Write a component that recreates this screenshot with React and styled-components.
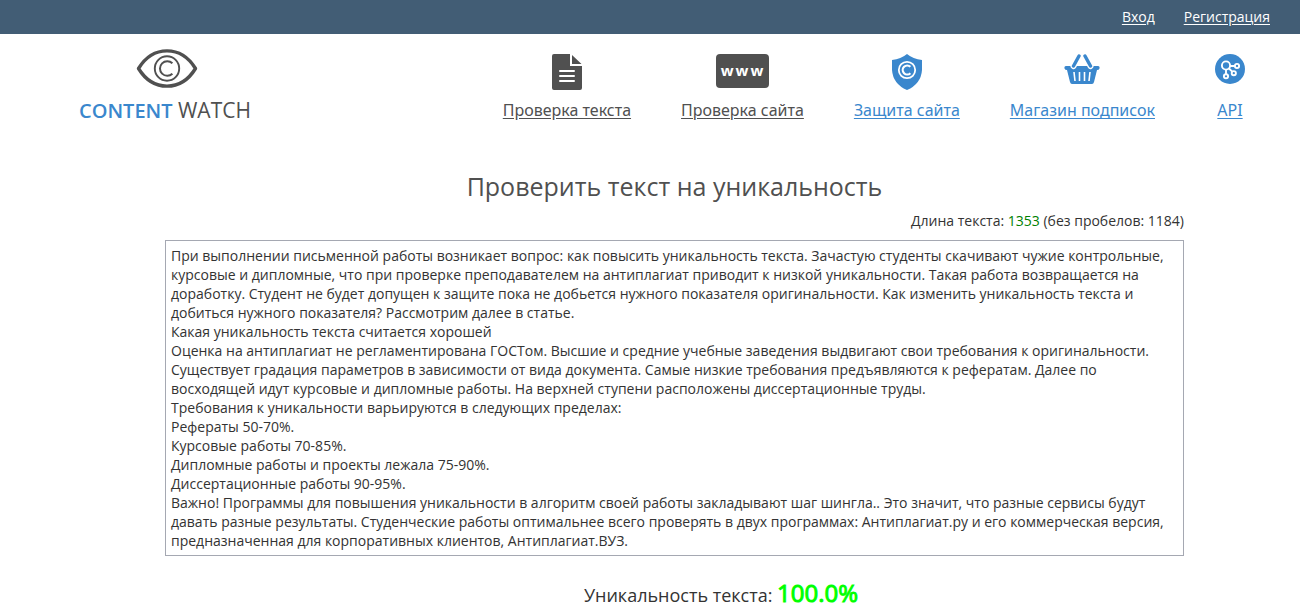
import React from "react";
import styled, { createGlobalStyle } from "styled-components";

const GlobalStyle = createGlobalStyle`
  * { box-sizing: border-box; }
  body {
    margin: 0;
    background: #fff;
    color: #333;
    font-family: "Open Sans", "Noto Sans", sans-serif;
    font-size: 14px;
    line-height: 20px;
  }
`;

const TopBar = styled.div`
  display: flex;
  justify-content: flex-end;
  align-items: center;
  gap: 29px;
  height: 34px;
  padding: 0 30px;
  background: #425d75;
`;

const TopLink = styled.a`
  color: #fff;
  text-underline-offset: 2px;
`;

const Header = styled.header`
  display: flex;
  justify-content: space-between;
  align-items: flex-start;
  padding: 15px 45px 0 79px;
`;

const Logo = styled.a`
  display: flex;
  flex-direction: column;
  align-items: center;
  gap: 9px;
  color: #505050;
  font-size: 21px;
  line-height: 24px;
  text-decoration: none;
  white-space: nowrap;
  svg { display: block; margin-left: 5px; }
`;

const Brand = styled.span`
  color: #3a87cd;
  font-size: 20px;
  font-weight: 600;
`;

const Nav = styled.nav`
  display: flex;
  gap: 50px;
  padding-top: 5px;
`;

const NavLink = styled.a`
  display: flex;
  flex-direction: column;
  align-items: center;
  gap: 8px;
  min-width: 50px;
  color: ${({ $accent }) => ($accent ? "#3a87cd" : "#505050")};
  font-family: "Noto Sans", "Open Sans", sans-serif;
  font-size: 16px;
  line-height: 24px;
  white-space: nowrap;
  text-underline-offset: 2px;
  svg { display: block; height: 36px; }
`;

const Main = styled.main`
  padding: 46px 116px 0 165px;
`;

const Title = styled.h1`
  margin: 0;
  color: #505050;
  font-size: 25px;
  font-weight: 400;
  line-height: 34px;
  text-align: center;
`;

const Counter = styled.label`
  display: block;
  margin: 8px 0 9px;
  text-align: right;
`;

const Count = styled.span`
  color: #008000;
`;

const TextInput = styled.textarea`
  display: block;
  width: 100%;
  padding: 5px;
  border: 1px solid #a5a8b2;
  border-radius: 0;
  outline: 0;
  resize: none;
  overflow: auto;
  background: #fff;
  color: #333;
  font: inherit;
  line-height: 19px;
`;

const Result = styled.p`
  margin: 19px 0 0;
  padding-left: 93px;
  font-size: 18px;
  line-height: 36px;
  text-align: center;
`;

const Score = styled.output`
  color: #0f0;
  font-size: 24px;
  -webkit-text-stroke: 1px #0f0;
`;

const EyeLogo = () => (
  <svg width="62" height="40" viewBox="0 0 62 40" fill="none" stroke="#505050" aria-hidden="true">
    <path d="M2.500 19.500C17-4 45-4 59.500 19.500C45 43 17 43 2.500 19.500Z" strokeWidth="3.400" strokeLinejoin="round" />
    <circle cx="31" cy="19.500" r="12.200" strokeWidth="1.900" />
    <path d="M36.400 14.300A7.300 7.300 0 1 0 36.400 24.700" strokeWidth="2" />
  </svg>
);

const DocumentIcon = () => (
  <svg width="30" height="36" viewBox="0 0 30 36" aria-hidden="true">
    <path fill="#505050" d="M2 0H18V12H30V34Q30 36 28 36H2Q0 36 0 34V2Q0 0 2 0ZM20 1L29.500 10H20Z" />
    <path stroke="#fff" strokeWidth="2" strokeLinecap="round" d="M8 17H22M8 22H22M8 27H22" />
  </svg>
);

const WwwIcon = () => (
  <svg width="53" height="36" viewBox="0 0 53 36" aria-hidden="true">
    <rect width="53" height="34" rx="4" fill="#505050" />
    <text x="27" y="22" textAnchor="middle" fill="#fff" fontFamily="Open Sans" fontSize="15" fontWeight="700" letterSpacing="2">www</text>
  </svg>
);

const ShieldIcon = () => (
  <svg width="30" height="36" viewBox="0 0 30 36" aria-hidden="true">
    <path fill="#3a87cd" d="M15 0Q21 5 30 6V16Q29 30 15 36Q1 30 0 16V6Q9 5 15 0Z" />
    <g fill="none" stroke="#fff">
      <circle cx="15" cy="16" r="8.200" strokeWidth="1.800" />
      <path d="M18.400 12.800A4.500 4.500 0 1 0 18.400 19.200" strokeWidth="2.200" />
    </g>
  </svg>
);

const BasketIcon = () => (
  <svg width="36" height="36" viewBox="0 0 36 36" aria-hidden="true">
    <path fill="#3a87cd" d="M2 12H34Q36 12 35.500 14.500Q35 16 33 16L30 28Q29.500 30 28 30H8Q6.500 30 6 28L3 16Q1 16 .5 14.500Q0 12 2 12Z" />
    <path stroke="#fff" strokeWidth="6" strokeLinecap="round" d="M9.500 12L15 2M26.500 12L21 2" />
    <path stroke="#3a87cd" strokeWidth="3.400" strokeLinecap="round" d="M9.500 12L15 2M26.500 12L21 2" />
    <path stroke="#fff" strokeWidth="1.600" d="M10 18L11 27M15.500 18V27M20.500 18V27M26 18L25 27" />
  </svg>
);

const ApiIcon = () => (
  <svg width="30" height="36" viewBox="0 0 30 36" aria-hidden="true">
    <circle cx="15" cy="15" r="15" fill="#3a87cd" />
    <g fill="none" stroke="#fff" strokeWidth="1.900">
      <circle cx="11" cy="11.500" r="4.100" />
      <circle cx="22" cy="12" r="2.100" />
      <circle cx="18.800" cy="19.200" r="2.100" />
      <circle cx="11" cy="22.300" r="2.100" />
      <path d="M15 12H19.900M14 14.500L17.200 17.600M11 15.600V20.200" />
    </g>
  </svg>
);

const navItems = [
  { label: "Проверка текста", Icon: DocumentIcon },
  { label: "Проверка сайта", Icon: WwwIcon },
  { label: "Защита сайта", Icon: ShieldIcon, accent: true },
  { label: "Магазин подписок", Icon: BasketIcon, accent: true },
  { label: "API", Icon: ApiIcon, accent: true },
];

const sampleText = `При выполнении письменной работы возникает вопрос: как повысить уникальность текста. Зачастую студенты скачивают чужие контрольные, курсовые и дипломные, что при проверке преподавателем на антиплагиат приводит к низкой уникальности. Такая работа возвращается на доработку. Студент не будет допущен к защите пока не добьется нужного показателя оригинальности. Как изменить уникальность текста и добиться нужного показателя? Рассмотрим далее в статье.
Какая уникальность текста считается хорошей
Оценка на антиплагиат не регламентирована ГОСТом. Высшие и средние учебные заведения выдвигают свои требования к оригинальности. Существует градация параметров в зависимости от вида документа. Самые низкие требования предъявляются к рефератам. Далее по восходящей идут курсовые и дипломные работы. На верхней ступени расположены диссертационные труды.
Требования к уникальности варьируются в следующих пределах:
Рефераты 50-70%.
Курсовые работы 70-85%.
Дипломные работы и проекты лежала 75-90%.
Диссертационные работы 90-95%.
Важно! Программы для повышения уникальности в алгоритм своей работы закладывают шаг шингла.. Это значит, что разные сервисы будут давать разные результаты. Студенческие работы оптимальнее всего проверять в двух программах: Антиплагиат.ру и его коммерческая версия, предназначенная для корпоративных клиентов, Антиплагиат.ВУЗ.`;

export default function App() {
  return (
    <>
      <GlobalStyle />
      <TopBar>
        <TopLink href="#login">Вход</TopLink>
        <TopLink href="#register">Регистрация</TopLink>
      </TopBar>
      <Header>
        <Logo href="#home">
          <EyeLogo />
          <span><Brand>CONTENT</Brand> WATCH</span>
        </Logo>
        <Nav>
          {navItems.map(({ label, Icon, accent }) => (
            <NavLink key={label} href="#" $accent={accent}>
              <Icon />
              <span>{label}</span>
            </NavLink>
          ))}
        </Nav>
      </Header>
      <Main>
        <Title>Проверить текст на уникальность</Title>
        <Counter htmlFor="text">
          Длина текста: <Count>1353</Count> (без пробелов: 1184)
        </Counter>
        <TextInput id="text" rows={16} spellCheck={false} defaultValue={sampleText} />
        <Result>
          Уникальность текста: <Score htmlFor="text">100.0%</Score>
        </Result>
      </Main>
    </>
  );
}
